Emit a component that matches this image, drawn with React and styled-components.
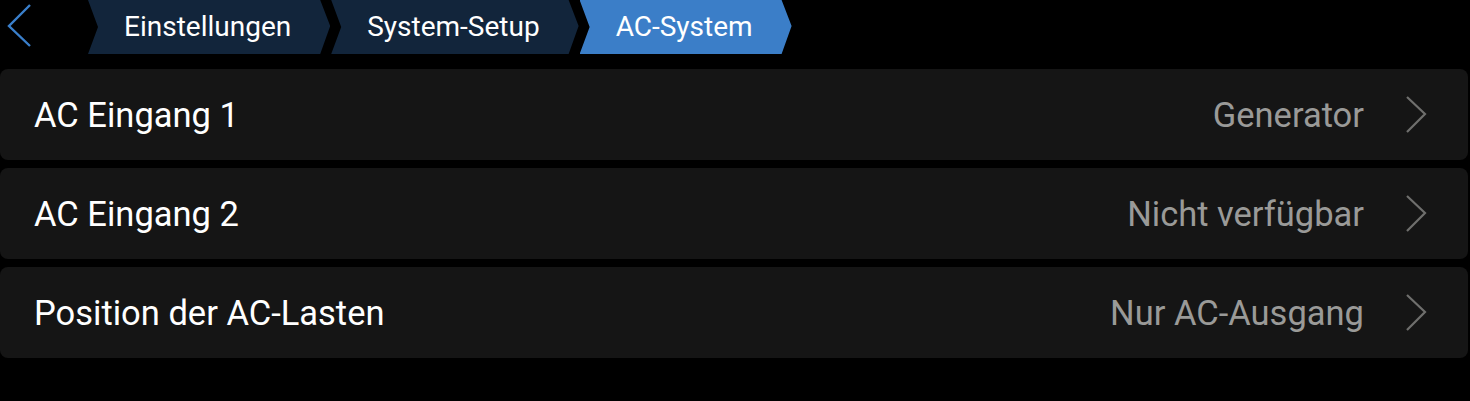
import styled, { createGlobalStyle } from "styled-components";

const GlobalStyle = createGlobalStyle`
  html, body {
    margin: 0;
    padding: 0;
    background: #000;
  }
  body {
    font-family: Roboto, "Liberation Sans", sans-serif;
    color: #fff;
  }
`;

const crumbs = [
  { label: "Einstellungen", active: false },
  { label: "System-Setup", active: false },
  { label: "AC-System", active: true },
];

const rows = [
  { label: "AC Eingang 1", value: "Generator" },
  { label: "AC Eingang 2", value: "Nicht verfügbar" },
  { label: "Position der AC-Lasten", value: "Nur AC-Ausgang" },
];

export default function App() {
  return (
    <>
      <GlobalStyle />
      <Page>
        <Header>
          <BackBtn>
            <svg width="26" height="46" viewBox="0 0 26 46">
              <polyline
                points="24,3 3,24 24,44"
                fill="none"
                stroke="#3a7fcb"
                strokeWidth="2.4"
              />
            </svg>
          </BackBtn>
          <Crumbs>
            {crumbs.map((c) => (
              <Crumb key={c.label} $active={c.active}>
                {c.label}
              </Crumb>
            ))}
          </Crumbs>
        </Header>
        <List>
          {rows.map((r) => (
            <Row key={r.label}>
              <Label>{r.label}</Label>
              <Right>
                <Value>{r.value}</Value>
                <svg width="24" height="40" viewBox="0 0 24 40">
                  <polyline
                    points="3,2 21,19 3,37"
                    fill="none"
                    stroke="#6f6f6d"
                    strokeWidth="2.2"
                  />
                </svg>
              </Right>
            </Row>
          ))}
        </List>
      </Page>
    </>
  );
}

const Page = styled.div`
  width: 1470px;
  height: 401px;
  display: flex;
  flex-direction: column;
  gap: 15px;
`;

const Header = styled.div`
  height: 54px;
  display: flex;
  align-items: flex-start;
`;

const BackBtn = styled.div`
  width: 88px;
  height: 54px;
  display: flex;
  align-items: flex-start;
  padding-left: 6px;
  padding-top: 2px;
  box-sizing: border-box;
`;

const Crumbs = styled.div`
  display: flex;
  gap: 1px;
`;

const Crumb = styled.div`
  height: 54px;
  padding: 0 39px 2px 36px;
  display: flex;
  align-items: center;
  font-size: 28px;
  color: #fff;
  background: ${(p) => (p.$active ? "#3b7ec8" : "#12253b")};
  clip-path: polygon(
    0 0,
    calc(100% - 10px) 0,
    100% 26px,
    calc(100% - 10px) 100%,
    0 100%,
    10px 27px
  );
  box-sizing: border-box;
`;

const List = styled.div`
  display: flex;
  flex-direction: column;
  gap: 8px;
  padding-right: 2px;
`;

const Row = styled.div`
  height: 91px;
  background: #151515;
  border-radius: 8px;
  display: flex;
  align-items: center;
  justify-content: space-between;
  padding: 0 40px 0 34px;
  box-sizing: border-box;
`;

const Label = styled.span`
  font-size: 34.5px;
  color: #fff;
`;

const Right = styled.div`
  display: flex;
  align-items: center;
  gap: 40px;
`;

const Value = styled.span`
  font-size: 34.5px;
  color: #9a9a98;
`;
